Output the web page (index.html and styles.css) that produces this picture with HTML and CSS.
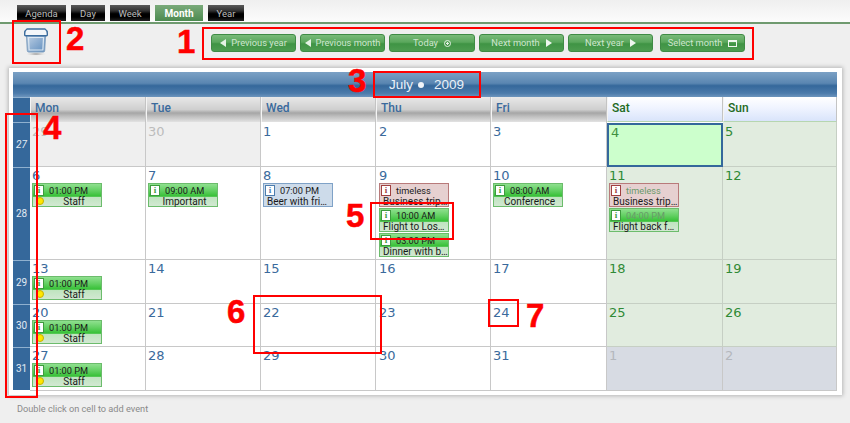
FILE: index.html
```html
<!DOCTYPE html>
<html lang="en">
<head>
<meta charset="utf-8">
<title>Calendar</title>
<link rel="stylesheet" href="styles.css">
</head>
<body>
<div class="page">
  <nav class="tabs">
    <a class="tab tab-agenda">Agenda</a>
    <a class="tab tab-day">Day</a>
    <a class="tab tab-week">Week</a>
    <a class="tab tab-month active">Month</a>
    <a class="tab tab-year">Year</a>
  </nav>
  <div class="rule"></div>
  <div class="toolbar">
    <svg class="bin" width="24" height="28" viewBox="0 0 24 28" aria-hidden="true">
      <defs>
        <linearGradient id="binBody" x1="0" y1="0" x2="1" y2="1">
          <stop offset="0" stop-color="#c3d4e6"/>
          <stop offset="0.5" stop-color="#8eaed1"/>
          <stop offset="1" stop-color="#5d8cbd"/>
        </linearGradient>
        <radialGradient id="binShadow">
          <stop offset="0" stop-color="#808080"/>
          <stop offset="1" stop-color="#efefef" stop-opacity="0"/>
        </radialGradient>
      </defs>
      <ellipse cx="12" cy="26" rx="11" ry="1.800" fill="url(#binShadow)"/>
      <path d="M2.500 7h19l-.8 15.500q0 1.500-1.500 1.500h-14.400q-1.500 0-1.500-1.500z" fill="url(#binBody)" stroke="#7d9dbd"/>
      <path d="M4.500 9.500h15l-.6 12.500h-13.800z" fill="none" stroke="#dce7f1" stroke-width="1.200"/>
      <path d="M.7 5q0-2.500 2.300-4h18q2.300 1.500 2.300 4v2q0 .7-.7.7h-21.200q-.7 0-.7-.7z" fill="#f3f6f9" stroke="#3c6d9e" stroke-width="1.400"/>
    </svg>
    <div class="nav-buttons">
      <button class="btn"><span class="tri-left"></span>Previous year</button>
      <button class="btn"><span class="tri-left"></span>Previous month</button>
      <button class="btn btn-wide">Today<span class="target"></span></button>
      <button class="btn">Next month<span class="tri-right"></span></button>
      <button class="btn">Next year<span class="tri-right"></span></button>
      <button class="btn btn-select">Select month<span class="cal-ico"></span></button>
    </div>
  </div>
  <main class="card">
    <div class="title"><span>July</span><span class="dot"></span><span class="year">2009</span></div>
    <div class="grid">
      <div class="corner"></div>
      <div class="dow">Mon</div><div class="dow">Tue</div><div class="dow">Wed</div><div class="dow">Thu</div><div class="dow">Fri</div>
      <div class="dow wkend">Sat</div><div class="dow wkend">Sun</div>

      <div class="wk"><i>27</i></div>
      <div class="cell r1 prev">29</div><div class="cell r1 prev">30</div>
      <div class="cell r1">1</div><div class="cell r1 c3">2</div><div class="cell r1">3</div>
      <div class="cell today">4</div><div class="cell r1 we">5</div>

      <div class="wk">28</div>
      <div class="cell">6
        <div class="ev green"><div class="ev-top"><b class="i">i</b>01:00 PM</div><div class="ev-sub center pinned">Staff</div><em class="pin"></em></div>
      </div>
      <div class="cell">7
        <div class="ev green"><div class="ev-top"><b class="i">i</b>09:00 AM</div><div class="ev-sub center">Important</div></div>
      </div>
      <div class="cell">8
        <div class="ev blue"><div class="ev-top"><b class="i">i</b>07:00 PM</div><div class="ev-sub">Beer with fri…</div></div>
      </div>
      <div class="cell c3">9
        <div class="ev red"><div class="ev-top"><b class="i">i</b>timeless</div><div class="ev-sub">Business trip…</div></div>
        <div class="ev green"><div class="ev-top"><b class="i">i</b>10:00 AM</div><div class="ev-sub">Flight to Los…</div></div>
        <div class="ev green"><div class="ev-top"><b class="i">i</b>03:00 PM</div><div class="ev-sub">Dinner with b…</div></div>
      </div>
      <div class="cell">10
        <div class="ev green"><div class="ev-top"><b class="i">i</b>08:00 AM</div><div class="ev-sub center">Conference</div></div>
      </div>
      <div class="cell we">11
        <div class="ev red"><div class="ev-top"><b class="i">i</b><span class="gtime">timeless</span></div><div class="ev-sub">Business trip…</div></div>
        <div class="ev green"><div class="ev-top"><b class="i">i</b><span class="gtime">04:00 PM</span></div><div class="ev-sub">Flight back f…</div></div>
      </div>
      <div class="cell we">12</div>

      <div class="wk">29</div>
      <div class="cell">13
        <div class="ev green"><div class="ev-top"><b class="i">i</b>01:00 PM</div><div class="ev-sub center pinned">Staff</div><em class="pin"></em></div>
      </div>
      <div class="cell">14</div><div class="cell">15</div><div class="cell c3">16</div><div class="cell">17</div>
      <div class="cell we">18</div><div class="cell we">19</div>

      <div class="wk">30</div>
      <div class="cell">20
        <div class="ev green"><div class="ev-top"><b class="i">i</b>01:00 PM</div><div class="ev-sub center pinned">Staff</div><em class="pin"></em></div>
      </div>
      <div class="cell">21</div><div class="cell">22</div><div class="cell c3">23</div><div class="cell">24</div>
      <div class="cell we">25</div><div class="cell we">26</div>

      <div class="wk wk-last">31</div>
      <div class="cell">27
        <div class="ev green"><div class="ev-top"><b class="i">i</b>01:00 PM</div><div class="ev-sub center pinned">Staff</div><em class="pin"></em></div>
      </div>
      <div class="cell">28</div><div class="cell">29</div><div class="cell c3">30</div><div class="cell">31</div>
      <div class="cell next">1</div><div class="cell next">2</div>
    </div>
  </main>
  <p class="hint">Double click on cell to add event</p>

  <div class="mark box1"></div><div class="num num1">1</div>
  <div class="mark box2"></div><div class="num num2">2</div>
  <div class="mark box3"></div><div class="num num3">3</div>
  <div class="mark box4"></div><div class="num num4">4</div>
  <div class="mark box5"></div><div class="num num5">5</div>
  <div class="mark box6"></div><div class="num num6">6</div>
  <div class="mark box7"></div><div class="num num7">7</div>
</div>
</body>
</html>
```
FILE: styles.css
```css
* { box-sizing: border-box; }
html, body { margin: 0; padding: 0; }
body {
  width: 850px;
  height: 423px;
  overflow: hidden;
  background: #efefef;
  font-family: Roboto, "Liberation Sans", sans-serif;
}
.page { position: relative; width: 850px; height: 423px; }

/* Tabs */
.tabs {
  height: 22px;
  padding: 5px 0 0 17px;
  display: flex;
  align-items: flex-start;
  background: linear-gradient(#efefef, #fcfcfc);
}
.tab {
  height: 16px;
  margin-right: 5px;
  background: linear-gradient(#5a5a5a 0, #333 35%, #000 55%, #000 75%, #222 100%);
  color: #bdbdbd;
  font-size: 9.500px;
  line-height: 17px;
  text-align: center;
}
.tab-agenda { width: 49px; }
.tab-day { width: 34px; }
.tab-week { width: 40px; }
.tab-month { width: 48px; }
.tab-year { width: 36px; margin-right: 0; }
.tab.active {
  background: linear-gradient(#7aaa7a, #4c8a50);
  color: #fff;
  font-weight: 700;
  font-size: 10px;
}
.rule { height: 2px; background: #6f9a6f; }

/* Toolbar */
.toolbar {
  height: 44px;
  display: flex;
  align-items: flex-start;
  padding: 4px 0 0 24px;
}
.bin { display: block; flex: none; }
.nav-buttons {
  display: flex;
  gap: 4px;
  margin: 6px 0 0 163px;
}
.btn {
  width: 85px;
  height: 18px;
  padding: 0;
  display: flex;
  align-items: center;
  justify-content: center;
  border: 1px solid #3f8b45;
  border-radius: 3px;
  background: linear-gradient(#79ba79 0, #5aa75c 45%, #3f9444 55%, #4d9c50 100%);
  color: #cfe6cf;
  font: 9.300px/16px Roboto, sans-serif;
}
.btn-wide { width: 86px; }
.btn-select { margin-left: 3px; }
.tri-left {
  width: 0; height: 0; margin-right: 5px;
  border: 4px solid transparent;
  border-left-width: 0;
  border-right: 6px solid #e4f2e4;
}
.tri-right {
  width: 0; height: 0; margin-left: 6px;
  border: 4px solid transparent;
  border-right-width: 0;
  border-left: 6px solid #eef7ee;
}
.target {
  width: 7px; height: 7px; margin-left: 6px;
  border: 1px solid #e4f2e4;
  border-radius: 50%;
  background: radial-gradient(circle, #e4f2e4 0 1px, transparent 1.300px);
}
.cal-ico {
  width: 9px; height: 7px; margin-left: 6px;
  border: 1px solid #f0f8f0;
  border-top-width: 2px;
}

/* Calendar card */
.card {
  width: 833px;
  height: 327px;
  margin-left: 9px;
  padding: 4px 5px 4px 4px;
  background: #fff;
  box-shadow: 0 0 4px 1px #b5b5b5;
}
.title {
  height: 25px;
  display: flex;
  align-items: center;
  justify-content: center;
  padding-left: 3px;
  background: linear-gradient(#7ba1c5 0, #5a86b1 45%, #35689b 55%, #4c7bab 85%, #6d95bd 100%);
  color: #eaf1f8;
  font: 13.500px/16px "Liberation Sans", sans-serif;
}
.dot { width: 6px; height: 6px; margin: 0 10px 0 5px; border-radius: 50%; background: #f0f4f8; }
.grid {
  display: grid;
  grid-template-columns: 17px 116px 115px 115px 115px 116px 116px 114px;
  grid-template-rows: 25px 45px 93px 44px 43px 44px;
  width: 824px;
}
.corner { background: #35689b; border-top: 1px solid #8fb0cf; }
.dow {
  border-left: 1px solid #f4f4f4;
  border-right: 1px solid #c4c4c4;
  padding: 3px 0 0 4px;
  background: linear-gradient(#e8e8e8 0, #cfcfcf 50%, #a6a6a6 64%, #bcbcbc 76%, #e2e2e2 100%);
  color: #3a6a9c;
  font: 500 12px/17px Roboto, sans-serif;
}
.dow.wkend {
  background: linear-gradient(#fff 0, #f0f4ff 45%, #d9e4fb 100%);
  border-bottom: 1px solid #b6d6b0;
  color: #1f6b24;
}
.wk {
  background: #35689b;
  border-top: 1px solid #8fb0cf;
  color: #e1eaf3;
  font: 10px/1 Roboto, sans-serif;
  display: flex;
  align-items: center;
  justify-content: center;
}
.wk-last { border-bottom: 1px solid #fff; }
.wk i { font-style: italic; }
.cell {
  border-right: 1px solid #c8c8c8;
  border-bottom: 1px solid #c8c8c8;
  padding: 1px 0 0 2px;
  background: #fff;
  font: 13px/15px "DejaVu Sans", sans-serif;
  color: #3a6a9c;
}
.cell.r1 { padding-top: 2px; }
.cell.c3 { padding-left: 3px; }
.cell.prev { background: #efefef; color: #bcbcbc; }
.cell.next { background: #d7dbe3; color: #b4b7bd; }
.cell.we { background: #e1ecdf; color: #2f8a35; border-color: #c6cfc4; }
.cell.today {
  margin-top: 1px;
  background: #ccffcc;
  color: #3f913f;
  border: 2px solid #34689b;
  padding: 0 0 0 2px;
}

/* Events */
.ev {
  position: relative;
  width: 70px;
  height: 24px;
  margin-bottom: 1px;
  border: 1px solid;
  font: 10px/11px Roboto, sans-serif;
  color: #1a1a1a;
}
.ev-top { height: 13px; padding-left: 1px; display: flex; align-items: center; font-size: 9.200px; }
.ev-sub { height: 9px; line-height: 9px; white-space: nowrap; padding-left: 3px; }
.ev-sub.center { text-align: center; }
.ev-sub.pinned { padding-left: 14px; }
.i {
  flex: none;
  width: 10px; height: 11px; margin-right: 5px;
  background: #fff;
  border: 1px solid;
  font: 700 9px/9px "Liberation Serif", serif;
  text-align: center;
}
.green {
  border-color: #6cbc6c;
  background: linear-gradient(#8fe08f 0, #62d062 30%, #36c036 56%, #bfe4bf 60%, #d2e8d2 100%);
}
.green .i { border-color: #3e9b3e; color: #3e9b3e; }
.blue { border-color: #7fa2c7; background: #cddbea; }
.blue .i { border-color: #4c7dae; color: #4c7dae; }
.red { border-color: #b87a7a; background: #e6d0d0; }
.red .i { border-color: #a04040; color: #a04040; }
.gtime { color: #6a9a6a; }
.pin {
  position: absolute;
  left: 3px; top: 13px;
  width: 8px; height: 8px;
  border-radius: 50%;
  background: #ffe600;
  border: 1px solid #c8b000;
}

.hint {
  margin: 7px 0 0 17px;
  color: #8a8a8a;
  font-size: 9.200px;
  line-height: 14px;
}

/* Annotation overlays */
.mark { position: absolute; border: 2px solid #f00; pointer-events: none; }
.num {
  position: absolute;
  color: #f00;
  font: 700 33px/33px "Liberation Sans", sans-serif;
  -webkit-text-stroke: 0.5px #f00;
}
.box1 { left: 202px; top: 27px; width: 552px; height: 33px; }
.box2 { left: 12px; top: 20px; width: 49px; height: 44px; }
.box3 { left: 373px; top: 71px; width: 108px; height: 27px; }
.box4 { left: 5px; top: 113px; width: 33px; height: 285px; }
.box5 { left: 370px; top: 202px; width: 84px; height: 38px; }
.box6 { left: 253px; top: 295px; width: 129px; height: 59px; }
.box7 { left: 488px; top: 299px; width: 31px; height: 28px; }
.num1 { left: 177px; top: 25px; }
.num2 { left: 66px; top: 22px; }
.num3 { left: 348px; top: 64px; }
.num4 { left: 43px; top: 111px; }
.num5 { left: 346px; top: 199px; }
.num6 { left: 227px; top: 295px; }
.num7 { left: 526px; top: 299px; }
```
